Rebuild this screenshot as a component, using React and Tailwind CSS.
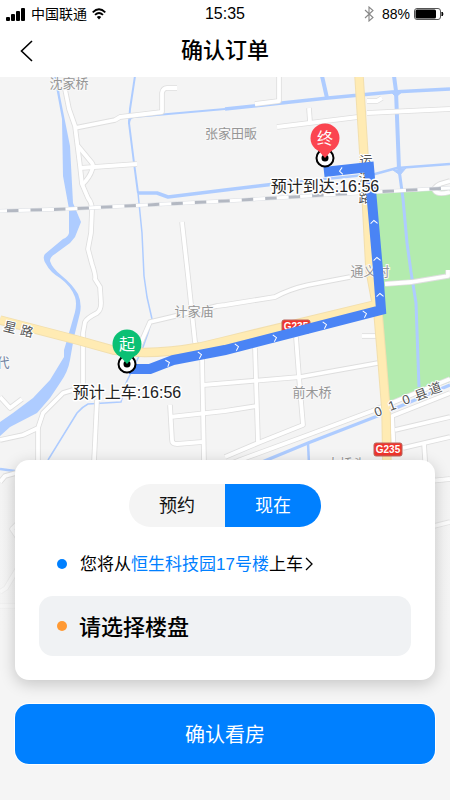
import { useState } from 'react';

const RIVER =
  'M54 76 L62 119 L63 176 L69 209 L69 233 Q68 237 63 239 L45 254 Q42 258 46 264 Q50 272 60 278 Q71 286 75 297 Q77 303 75 312 L67 340 L64 350 L64 357 L50 380 L33 398 L13 413 L0 422 V436 L10 427 L37 413 L50 398 L60 383 Q68 372 70 360 L74 337 L80 313 Q82 303 78 294 Q72 284 62 276 Q52 268 50 261 Q50 257 55 254 L70 243 L75 237 L81 222 L73 203 L70 146 L60 96 L57 76Z';

const STREAMS = [
  { d: 'M135 76 L130 109 L129 123 L134 163 L138 193', w: 2 },
  { d: 'M138 193 L142 233 L144 276 L147 297 L152 319 L148 333 L142 350 L126 383 L121 402 L88 404 Q82 407 77 413 L48 460', w: 1.5 },
  { d: 'M129 124 Q129 117 134 117 L225 109', w: 2 },
  { d: 'M225 109 L328 98 L392 92 L450 89', w: 3.5 },
  { d: 'M322 76 L327 98', w: 4 },
  { d: 'M394 76 L396 91 L399 169', w: 4 },
  { d: 'M399 169 L403 199 L407 243 L411 272 L416 303 L419 387', w: 3 },
  { d: 'M138 193 H157 L168 197 L225 190 L275 184', w: 3.5 },
  { d: 'M275 184 L375 174 L397 168 L450 164', w: 2.5 },
  { d: 'M262 462 L308 443 L375 417 L450 385', w: 3 },
  { d: 'M308 443 L309 464', w: 2.5 },
  { d: 'M0 469 L15 471', w: 2.5 },
];

const ROADS = [
  'M65 89 L69 109 L75 126 L80 166 L82 184 L88 198 Q92 203 92 210 L91 233 L88 249 L92 264 Q96 276 95 279 L100 287 L101 303 Q101 310 97 313 Q87 318 85 322 L83 333 V387',
  'M75 128 L115 120 L120 117 L162 112 V93 Q163 88 167 88 H177',
  'M80 168 L137 164',
  'M78 146 L92 163 Q94 166 92 170 Q90 177 82 185',
  'M182 222 L188 276 L195 342 L202 355 L204 462',
  'M279 76 V101 L255 104',
  'M277 127 L358 117',
  'M309 108 L310 122',
  'M367 113 L450 109',
  'M367 101 H377 L382 98',
  'M450 181 L440 184 Q432 188 435 191 Q438 195 450 192',
  'M138 350 L143 338 L150 322 L167 318 L217 306 L225 305 L275 297 Q290 289 308 285 L350 277',
  'M385 284 L412 282 L448 276 V270',
  'M203 385 L300 377 L378 363',
  'M255 348 L258 442',
  'M296 337 L299 377 L303 425 L258 443 L225 457',
  'M170 417 L225 411 L257 406',
  'M170 405 L172 440 Q172 444 177 444 L202 442',
  'M215 470 L240 460 L308 435 L372 411 L450 379',
  'M392 415 L394 455',
  'M392 416 L450 393',
  'M395 430 L450 417',
  'M403 448 L450 437',
  'M424 443 L426 475',
  'M362 336 H376',
  'M97 400 L94 462',
  'M0 440 L23 435 L38 428 L43 413 L63 393 L73 390',
  'M38 428 V462',
  'M0 397 L10 408 L22 399',
  'M0 482 L5 476 L16 473',
  'M430 481 L450 479',
  'M430 527 L450 522',
  'M0 592 L6 588 L18 568',
  'M18 523 L12 529 L18 538',
  'M0 606 H18',
];

const HIGHWAYS = [
  'M0 320 L77 340 L113 350 Q150 356 200 347 L225 341 L374 305',
  'M359 76 L364 156 L370 270 L378 313 L382 360 L386 410 L387 470',
];

const RAILWAY = 'M0 211 L67 209 L225 201 L375 192 L450 188';

const PLACES = [
  { name: '沈家桥', x: 69, y: 88 },
  { name: '张家田畈', x: 231, y: 138 },
  { name: '计家庙', x: 194, y: 316 },
  { name: '通义村', x: 370, y: 276 },
  { name: '前木桥', x: 312, y: 397 },
  { name: '大桥头', x: 346, y: 468 },
];

// single characters that follow the direction of a road
const ROAD_CHARS = [
  { c: '星', x: 10, y: 327, r: 14 },
  { c: '路', x: 27, y: 331, r: 14 },
  { c: '运', x: 366, y: 160, r: 0 },
  { c: '溪', x: 365, y: 178, r: 0 },
  { c: '路', x: 365, y: 197, r: 0 },
  { c: '0', x: 378, y: 411, r: -20 },
  { c: '1', x: 392, y: 405, r: -20 },
  { c: '0', x: 406, y: 399, r: -20 },
  { c: '县', x: 421, y: 394, r: -20 },
  { c: '道', x: 435, y: 388, r: -20 },
];

const ARROWS = [
  { x: 168, y: 363, r: -20 },
  { x: 200, y: 355, r: -12 },
  { x: 237, y: 347, r: -13 },
  { x: 275, y: 338, r: -13 },
  { x: 325, y: 325, r: -14 },
  { x: 365, y: 314, r: -14 },
  { x: 380, y: 295, r: -92 },
  { x: 377, y: 259, r: -93 },
  { x: 374, y: 222, r: -93 },
  { x: 341, y: 171, r: 174 },
];

function RoadBadge({ x, y }) {
  return (
    <g>
      <rect x={x} y={y} width="28" height="13" rx="2" fill="#f0342c" stroke="#b9645c" />
      <text x={x + 14} y={y + 10} textAnchor="middle" fill="#fff" className="text-[10px] font-bold">G235</text>
    </g>
  );
}

function Pin({ x, y, color, char, label }) {
  return (
    <g>
      <circle cx={x} cy={y} r="8.5" fill="#fff" stroke="#000" strokeWidth="2" />
      <circle cx={x} cy={y} r="3.5" fill="#000" />
      <path d={`M${x - 8} ${y - 9} L${x} ${y} L${x + 8} ${y - 9}Z`} fill={color} />
      <circle cx={x} cy={y - 20} r="14.5" fill={color} />
      <text x={x} y={y - 14} textAnchor="middle" fill="#fff" className="text-[16px]">{char}</text>
      <text x={x} y={y + 34} textAnchor="middle" fill="#222" stroke="#fff" strokeWidth="3" strokeLinejoin="round" paintOrder="stroke" className="text-[16px]">{label}</text>
    </g>
  );
}

function RouteMap() {
  return (
    <svg
      viewBox="0 77 450 723"
      preserveAspectRatio="xMidYMin slice"
      className="absolute inset-0 h-full w-full"
      role="img"
      aria-label="路线地图"
    >
      <defs>
        <linearGradient id="fade" x1="0" y1="0" x2="0" y2="1">
          <stop offset="0" stopColor="#f5f5f5" stopOpacity="0" />
          <stop offset="1" stopColor="#f5f5f5" />
        </linearGradient>
      </defs>
      <rect y="77" width="450" height="723" fill="#f4f4f4" />
      <path d="M374 193 L450 190 V382 L388 404 L381 316Z" fill="#b3ebae" />
      <path d={RIVER} fill="#aeccff" />
      <g fill="none" stroke="#aeccff" strokeLinejoin="round">
        {STREAMS.map((s) => <path key={s.d} d={s.d} strokeWidth={s.w} />)}
        <path d="M390 91 L396 97 L403 91 M393 170 L400 175 L406 168" fill="#aeccff" />
      </g>

      <g fill="none" strokeLinejoin="round">
        <g stroke="#dedede" strokeWidth="5.5">
          {ROADS.map((d) => <path key={d} d={d} />)}
        </g>
        <g stroke="#fff" strokeWidth="3.8">
          {ROADS.map((d) => <path key={d} d={d} />)}
        </g>
        <g stroke="#f2dfae" strokeWidth="9.5">
          {HIGHWAYS.map((d) => <path key={d} d={d} />)}
        </g>
        <g stroke="#ffebb3" strokeWidth="7.5">
          {HIGHWAYS.map((d) => <path key={d} d={d} />)}
        </g>
        <path d={RAILWAY} stroke="#dcdfe4" strokeWidth="4" />
        <path d={RAILWAY} stroke="#fff" strokeWidth="3" />
        <path d={RAILWAY} stroke="#b3b8c2" strokeWidth="3" strokeDasharray="11.5 12" strokeDashoffset="-7" />
      </g>

      <g fill="#969696" stroke="#f8f8f8" strokeWidth="2" paintOrder="stroke" textAnchor="middle" className="text-[13px]">
        {PLACES.map((p) => <text key={p.name} x={p.x} y={p.y}>{p.name}</text>)}
        <text x="3" y="367" fill="#6d7f9f">代</text>
      </g>
      <g fill="#555" stroke="#fff" strokeWidth="2" paintOrder="stroke" textAnchor="middle" className="text-[13px]">
        {ROAD_CHARS.map((t) => (
          <text key={`${t.x}-${t.y}`} transform={`translate(${t.x} ${t.y}) rotate(${t.r})`} y="5">{t.c}</text>
        ))}
      </g>
      <RoadBadge x={282} y={320} />
      <RoadBadge x={374} y={443} />

      <path d="M129 369 H150 L173 360 L225 350 L381 310 L378 270 L369 167 L324 172" fill="none" stroke="#4a84f5" strokeWidth="10" />
      <g fill="none" stroke="#fff">
        {ARROWS.map((a) => (
          <path key={`${a.x}-${a.y}`} d="M-1.5 -3.5 L1.5 0 L-1.5 3.5" transform={`translate(${a.x} ${a.y}) rotate(${a.r})`} />
        ))}
      </g>

      <Pin x={127} y={364} color="#0bc074" char="起" label="预计上车:16:56" />
      <Pin x={325} y={158} color="#fb4550" char="终" label="预计到达:16:56" />

      <rect y="470" width="450" height="170" fill="url(#fade)" />
      <rect y="639" width="450" height="161" fill="#f5f5f5" />
    </svg>
  );
}

function StatusBar() {
  return (
    <div className="grid h-7 grid-cols-3 items-center px-[6px] text-[14px] leading-none">
      <div className="flex items-center gap-[5px]">
        <svg viewBox="0 0 20 14" className="h-[14px] w-5" fill="#000">
          <rect x="0" y="10" width="4" height="4" rx="1" />
          <rect x="5" y="7" width="4" height="7" rx="1" />
          <rect x="10" y="4" width="4" height="10" rx="1" />
          <rect x="15" y="1" width="4" height="13" rx="1" />
        </svg>
        <span>中国联通</span>
        <svg viewBox="0 0 14 12" className="h-3 w-[14px]" fill="none" stroke="#000" strokeWidth="1.8">
          <path d="M0.7 4.3 Q7 -1.7 13.3 4.3" />
          <path d="M3 6.9 Q7 3.2 11 6.9" />
          <path d="M4.8 9 Q7 7 9.2 9 L7 11.5Z" fill="#000" stroke="none" />
        </svg>
      </div>
      <span className="text-center text-[16px]">15:35</span>
      <div className="flex items-center justify-end gap-1">
        <svg viewBox="0 0 10 16" className="mr-1 h-4 w-[10px]" fill="none" stroke="#888" strokeWidth="1.1">
          <path d="M1 4 L9 11.5 L5 15 V1 L9 4.5 L1 12" />
        </svg>
        <span>88%</span>
        <svg viewBox="0 0 30 12" className="h-3 w-[30px]">
          <rect x="0.5" y="0.5" width="26" height="11" rx="2.5" fill="#fff" stroke="#555" />
          <rect x="1.5" y="1.5" width="20.5" height="9" rx="1.5" fill="#000" />
          <path d="M28 4 Q30 6 28 8Z" fill="#000" stroke="#000" />
        </svg>
      </div>
    </div>
  );
}

export default function App() {
  const [mode, setMode] = useState('now');

  const tab = (active) =>
    active ? 'flex-1 pt-[2px] bg-[#0080ff] text-white' : 'flex-1 pt-[2px] bg-[#f4f4f4] text-[#111]';

  return (
    <div className="flex min-h-screen flex-col bg-[#f5f5f5] font-['Liberation_Sans','Noto_Sans_CJK_SC',sans-serif] text-black">
      <header className="bg-white pb-[3px]">
        <StatusBar />
        <div className="grid h-[46px] grid-cols-[48px_1fr_48px] items-center">
          <button type="button" aria-label="返回" className="flex h-11 items-center pl-5">
            <svg viewBox="0 0 13 22" className="h-[22px] w-[13px]" fill="none" stroke="#000" strokeWidth="1.6">
              <path d="M12 1 L1.5 11 L12 21" />
            </svg>
          </button>
          <h1 className="text-center text-[22px] leading-7 font-medium">确认订单</h1>
        </div>
      </header>

      <main className="relative flex flex-1 flex-col justify-end gap-6 px-[15px] pt-80 pb-9">
        <RouteMap />

        <section className="relative flex flex-col rounded-[14px] bg-white p-6 shadow-[0_4px_16px_rgba(0,0,0,0.2)]">
          <div className="flex h-[43px] w-48 self-center overflow-hidden rounded-full text-[18px]">
            <button type="button" aria-pressed={mode === 'later'} onClick={() => setMode('later')} className={tab(mode === 'later')}>预约</button>
            <button type="button" aria-pressed={mode === 'now'} onClick={() => setMode('now')} className={tab(mode === 'now')}>现在</button>
          </div>

          <button type="button" className="mt-6 flex h-[26px] items-center pl-[18px] text-left text-[17px] leading-6">
            <span className="mr-[13px] size-[10px] rounded-full bg-[#0080ff]" />
            <span className="pt-[2px]">您将从<span className="text-[#0080ff]">恒生科技园17号楼</span>上车</span>
            <svg viewBox="0 0 8 14" className="ml-[2px] h-[14px] w-2" fill="none" stroke="#000" strokeWidth="1.3">
              <path d="M1 1 L7 7 L1 13" />
            </svg>
          </button>

          <button type="button" className="mt-[19px] flex h-[60px] items-center rounded-[14px] bg-[#f0f2f4] pl-[18px] text-left text-[22px] font-medium">
            <span className="mr-3 size-[10px] rounded-full bg-[#ff9933]" />
            <span className="pt-[2px]">请选择楼盘</span>
          </button>
        </section>

        <button type="button" className="relative h-[60px] rounded-[14px] bg-[#0080ff] pt-[2px] text-[20px] text-white ring-1 ring-white">
          确认看房
        </button>
      </main>
    </div>
  );
}
